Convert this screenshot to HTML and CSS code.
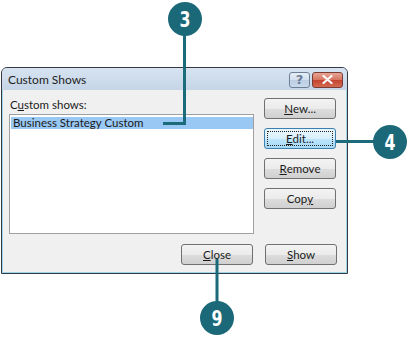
FILE: index.html
```html
<!DOCTYPE html>
<html>
  <head>
    <meta charset="UTF-8">
    <title>Custom Shows</title>
    <link rel="stylesheet" href="styles.css">
  </head>
  <body>
    <div class="page">
      <div class="window">
        <div class="titlebar">
          <span class="title">Custom Shows</span>
          <div class="caption-buttons">
            <span class="cap-btn help">?</span>
            <span class="cap-btn close">
              <svg width="11" height="9" viewBox="0 0 11 9">
                <path d="M1.5 1 L9.5 8 M9.5 1 L1.5 8" stroke="#fff" stroke-width="2.2" stroke-linecap="round"/>
              </svg>
            </span>
          </div>
        </div>
        <div class="window-body">
          <div class="main">
            <div class="list-col">
              <div class="list-label">C<u>u</u>stom shows:</div>
              <div class="listbox">
                <div class="list-item selected">Business Strategy Custom</div>
              </div>
            </div>
            <div class="side-buttons">
              <button class="button"><u>N</u>ew...</button>
              <button class="button focused"><span class="focus-ring"><u>E</u>dit...</span></button>
              <button class="button"><u>R</u>emove</button>
              <button class="button">Cop<u>y</u></button>
            </div>
          </div>
          <div class="footer">
            <button class="button"><u>C</u>lose</button>
            <button class="button"><u>S</u>how</button>
          </div>
        </div>
      </div>

      <svg class="callouts" width="408" height="341" viewBox="0 0 408 341">
        <g stroke="#1b6b7b" stroke-width="3" fill="none">
          <polyline points="184.5,30 184.5,123.5 163,123.5"/>
          <line x1="336" y1="141.5" x2="376" y2="141.5"/>
          <line x1="217" y1="259" x2="217" y2="305"/>
        </g>
        <g fill="#1b6878">
          <circle cx="185" cy="19" r="17"/>
          <circle cx="390" cy="142" r="17"/>
          <circle cx="217" cy="318" r="17"/>
        </g>
        <g class="callout-num">
          <text x="185" y="27" textLength="11" lengthAdjust="spacingAndGlyphs">3</text>
          <text x="390" y="150" textLength="11" lengthAdjust="spacingAndGlyphs">4</text>
          <text x="217" y="326" textLength="11" lengthAdjust="spacingAndGlyphs">9</text>
        </g>
      </svg>
    </div>
  </body>
</html>
```

FILE: styles.css
```css
* {
  box-sizing: border-box;
}
body {
  margin: 0;
  background-color: #fff;
  font-family: 'Lato', sans-serif;
  font-size: 11.5px;
  color: #1a1a1a;
}
.page {
  position: relative;
  width: 408px;
  height: 341px;
  padding-top: 67px;
  padding-left: 1px;
}
.window {
  width: 347px;
  border: 1px solid #343a40;
  border-radius: 6px 6px 0 0;
  background-color: #c8d7e8;
  overflow: hidden;
}
.titlebar {
  height: 22px;
  display: flex;
  align-items: center;
  justify-content: space-between;
  padding: 0 4px 0 6px;
  background: linear-gradient(#d7e3f0, #c5d5e7);
}
.title {
  font-size: 12px;
  color: #1e1e1e;
}
.caption-buttons {
  display: flex;
  gap: 2px;
  margin-top: 1px;
}
.cap-btn {
  height: 16px;
  display: flex;
  align-items: center;
  justify-content: center;
  border: 1px solid #6d7f94;
  border-radius: 3px;
}
.help {
  width: 21px;
  background: linear-gradient(#e6eef7 0%, #d2dfee 50%, #bccee3 51%, #c9d9ec 100%);
  color: #6a7c92;
  font-family: 'DejaVu Sans', sans-serif;
  font-size: 13px;
  font-weight: bold;
}
.close {
  width: 31px;
  border-color: #7a3b33;
  background: linear-gradient(#e8a597 0%, #d6735f 50%, #c4442f 51%, #d36a52 100%);
}
.window-body {
  background-color: #f0f0f0;
  border: 1px solid #9fd5ea;
  border-top: none;
  padding: 7px 9px 7px 6px;
}
.main {
  display: flex;
  gap: 10px;
}
.list-col {
  width: 245px;
  display: flex;
  flex-direction: column;
}
.list-label {
  height: 15px;
  line-height: 15px;
  padding-left: 1px;
  margin-bottom: 2px;
}
.listbox {
  height: 120px;
  background-color: #fff;
  border: 1px solid #a0a0a0;
  padding: 2px 0 0 1px;
}
.list-item {
  height: 12px;
  line-height: 12px;
  padding-left: 2px;
}
.list-item.selected {
  background-color: #99c8f4;
}
.side-buttons {
  width: 72px;
  display: flex;
  flex-direction: column;
  gap: 9px;
  padding-top: 1px;
}
.button {
  width: 72px;
  height: 21px;
  padding: 0;
  border: 1px solid #707070;
  border-radius: 3px;
  background: linear-gradient(#f3f3f3 0%, #ebebeb 50%, #dddddd 51%, #d0d0d0 100%);
  font-family: 'Lato', sans-serif;
  font-size: 11.5px;
  color: #1a1a1a;
  display: flex;
  align-items: center;
  justify-content: center;
}
.button.focused {
  border-color: #3c7fb1;
  background: linear-gradient(#eaf6fd 0%, #d9f0fc 50%, #bee6fd 51%, #a7d9f5 100%);
  padding: 2px;
}
.focus-ring {
  width: 100%;
  height: 100%;
  border: 1px dotted #222;
  display: flex;
  align-items: center;
  justify-content: center;
}
.footer {
  display: flex;
  justify-content: flex-end;
  gap: 12px;
  margin-top: 10px;
}
.callouts {
  position: absolute;
  left: 0;
  top: 0;
}
.callout-num text {
  fill: #fff;
  font-family: 'DejaVu Sans', sans-serif;
  font-weight: bold;
  font-size: 21px;
  text-anchor: middle;
}
```
